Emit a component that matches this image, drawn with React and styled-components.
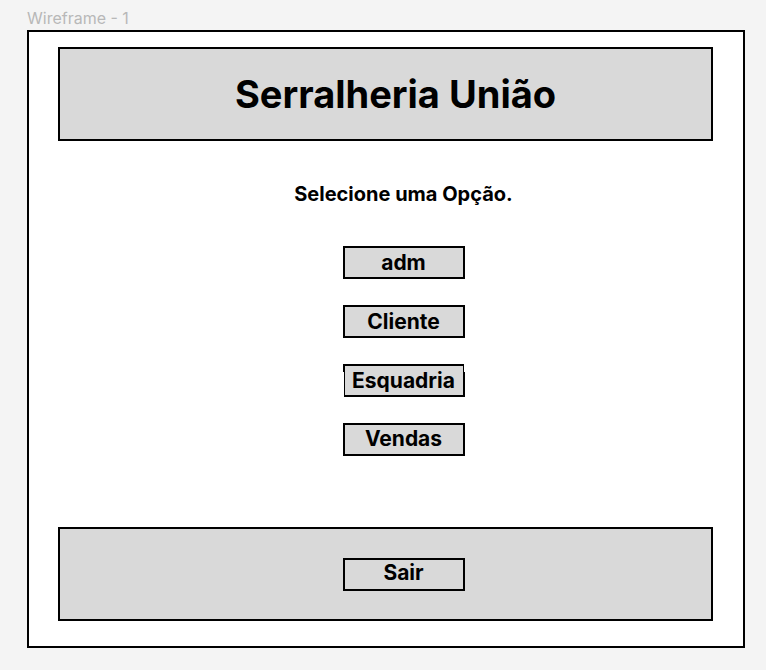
import React from "react";
import styled, { createGlobalStyle } from "styled-components";

const GlobalStyle = createGlobalStyle`
  * { box-sizing: border-box; }
  body {
    margin: 0;
    background: #f4f4f4;
    color: #000;
    font-family: Inter, sans-serif;
  }
`;

const Page = styled.div`
  padding: 6px 21px 22px 27px;
`;

const FrameLabel = styled.div`
  font-size: 16px;
  line-height: 24px;
  color: #b8b8b8;
`;

const Frame = styled.main`
  display: flex;
  flex-direction: column;
  padding: 15px 30px 25px 29px;
  border: 2px solid #000;
  background: #fff;
`;

const Bar = styled.div`
  display: flex;
  align-items: center;
  justify-content: center;
  min-height: 94px;
  border: 2px solid #000;
  background: #d9d9d9;
`;

const Banner = styled(Bar).attrs({ as: "header" })`
  padding-left: 20px;
`;

const Footer = styled(Bar).attrs({ as: "footer" })`
  padding-left: 36px;
`;

const Title = styled.h1`
  margin: 0;
  font-size: 38px;
  line-height: 48px;
  font-weight: 700;
`;

const Menu = styled.nav`
  display: flex;
  flex-direction: column;
  align-items: center;
  gap: 26px;
  padding: 39px 0 71px 36px;
`;

const Prompt = styled.h2`
  margin: 0 0 12px;
  font-size: 20px;
  line-height: 28px;
  font-weight: 700;
`;

const Option = styled.button`
  display: flex;
  align-items: center;
  justify-content: center;
  width: 122px;
  height: 33px;
  padding: 0 0 ${(p) => (p.$raised ? 2 : 0)}px;
  border: 2px solid #000;
  border-radius: 0;
  background: #d9d9d9;
  color: #000;
  font: 700 21px/24px Inter, sans-serif;
`;

/* An option whose outline steps to the right just below its top edge. */
const SteppedOption = styled(Option)`
  position: relative;

  &::before,
  &::after {
    content: "";
    position: absolute;
    width: 1px;
    background: #fff;
  }

  &::before {
    left: -2px;
    top: 6px;
    bottom: -2px;
  }

  &::after {
    right: -2px;
    top: -2px;
    height: 8px;
  }
`;

const options = [
  { name: "adm" },
  { name: "Cliente" },
  { name: "Esquadria", stepped: true },
  { name: "Vendas", raised: true },
];

export default function App() {
  return (
    <>
      <GlobalStyle />
      <Page>
        <FrameLabel>Wireframe - 1</FrameLabel>
        <Frame>
          <Banner>
            <Title>Serralheria União</Title>
          </Banner>
          <Menu>
            <Prompt>Selecione uma Opção.</Prompt>
            {options.map(({ name, raised, stepped }) => {
              const Item = stepped ? SteppedOption : Option;
              return (
                <Item key={name} type="button" $raised={raised}>{name}</Item>
              );
            })}
          </Menu>
          <Footer>
            <Option type="button" $raised>Sair</Option>
          </Footer>
        </Frame>
      </Page>
    </>
  );
}
